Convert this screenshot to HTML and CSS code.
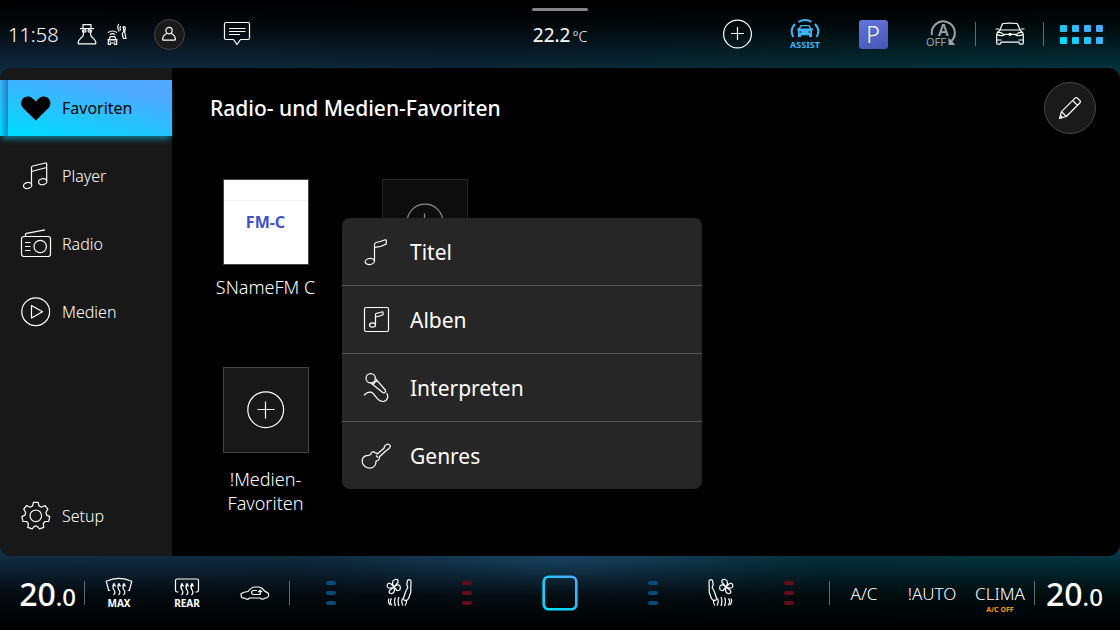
FILE: index.html
```html
<!DOCTYPE html>
<html lang="de">
<head>
<meta charset="utf-8">
<meta name="viewport" content="width=device-width, initial-scale=1">
<title>Radio- und Medien-Favoriten</title>
<link rel="stylesheet" href="styles.css">
</head>
<body>
<header class="topbar">
  <div class="status">
    <time class="clock">11:58</time>
    <div class="status-icons">
      <svg class="icon" width="20" height="22" viewBox="0 0 20 22"><path d="M6 5.500V1.600h8v3.900M3 5.700h14M6.500 10.500L5.300 7M13.500 10.500L14.700 7M6.500 10.500l-.5 2.500-3 3-1.700 2.500v2.300h17.400v-2.300L17 16l-3-3-.5-2.500"/><circle cx="7.700" cy="7.900" r="1.200"/><circle cx="12.300" cy="7.900" r="1.200"/></svg>
      <svg class="icon" width="20" height="22" viewBox="0 0 20 22"><path d="M2 17l1.200-3.400h4.600L9 17M.5 16.500h10M1.300 17v4.500h2V20h4.400v1.500h2V17zM2.500 18.500h1M7.500 18.500h1M3 11.600q2.500-1.800 5 0M1 9.500q4.500-3 9 0M13.800 3q-1.600 2 0 4.500M11.800 1Q9.500 4.200 12.200 8.500M16 4q2.300-1 2.300 1.500L17.700 9l1.300 6.500h-2.500L15.200 11l1.800-3z"/></svg>
    </div>
    <button class="slot" aria-label="Benutzer"><span class="avatar"><svg class="icon" width="16" height="16" viewBox="0 0 16 16"><circle cx="8" cy="4.600" r="3.200"/><path d="M5.800 7.500C3 9 1.600 10.500 1.600 13.200q0 1 1 1h10.800q1 0 1-1C14.400 10.500 13 9 10.200 7.500"/></svg></span></button>
    <button class="slot" aria-label="Nachrichten"><svg class="icon" width="28" height="26" viewBox="0 0 28 26"><path d="M3 1.500h22q1.500 0 1.500 1.500v14q0 1.500-1.500 1.500h-7.500l-3.500 5-3.500-5H3q-1.500 0-1.500-1.500V3Q1.500 1.500 3 1.500zM6 7.500h16.500M6 10.500h16.500M6 13.500h11"/></svg></button>
  </div>
  <div class="outside">
    <span class="handle"></span>
    <p class="outside-temp">22.2<small>°C</small></p>
  </div>
  <nav class="quick" aria-label="Schnellzugriff">
    <button class="slot" aria-label="Hinzufügen"><svg class="icon" width="30" height="30" viewBox="0 0 30 30"><circle cx="15.500" cy="15" r="13.900"/><path d="M9 14.500h13M15.500 8v13"/></svg></button>
    <button class="slot assist"><svg width="30" height="20" viewBox="0 0 30 20"><g fill="none" stroke="currentColor" stroke-width="2"><path d="M8.500 2.800Q15-.6 21.500 2.800M5 5Q-.8 11 3.400 18M25 5q5.800 6 1.600 13"/></g><path fill="currentColor" fill-rule="evenodd" d="M7 9.700l1.700-.4L10.500 6h9l1.800 3.300 1.700.4v1.500h-1V18h-3v-1.800h-8V18H8v-6.800H7zM11.300 7.200L10.200 9.500h9.600l-1.100-2.300zM9.500 12.500v1h2v-1zM18.500 12.500v1h2v-1z"/></svg><span>ASSIST</span></button>
    <button class="slot"><span class="park">P</span></button>
    <button class="slot stopstart" aria-label="Start-Stopp aus"><svg width="32" height="30" viewBox="0 0 32 30"><path d="M7 16A11.500 11.500 0 1 1 26.500 22" fill="none" stroke="currentColor" stroke-width="2"/><path d="M23.500 18.500v7.500h7z" fill="currentColor"/><text x="13" y="17" class="mark-a">A</text><text x="1" y="27" class="mark-off">OFF</text></svg></button>
    <span class="divider"></span>
    <button class="slot car-slot" aria-label="Fahrzeug"><svg class="icon" width="32" height="24" viewBox="0 0 32 24"><path d="M6 8Q7.500 3 9 1.500q7-.8 14 0Q24.500 3 26 8M1.500 7h3.800M26.700 7h3.800M6 8h20M6 8q-3 2-3.300 4.500v8.500q0 1.200 1.200 1.200h1.800q1.200 0 1.300-2h18q.1 2 1.300 2h1.800q1.200 0 1.200-1.200V12.500Q29 10 26 8M3.500 10.200q5 .2 6.500 3.300-4.500.5-7-1M28.500 10.200q-5 .2-6.500 3.300 4.500.5 7-1M10 12.300h12M3 18h4.500M29 18h-4.500"/><circle cx="16" cy="12.300" r="1"/></svg></button>
    <span class="divider"></span>
    <button class="apps" aria-label="Apps"><i></i><i></i><i></i><i></i><i></i><i></i><i></i><i></i></button>
  </nav>
</header>

<div class="panel">
  <nav class="sidebar" aria-label="Medien">
    <a class="nav-item active" href="#favoriten" aria-current="page"><svg width="32" height="32" viewBox="0 0 32 32"><path d="M15.800 28.500L3.300 16.300C.6 13.500 .5 9.500 2.800 6.800 5.300 3.900 9.800 4 12.600 6.500c1.600 1.200 2.400 2 3.200 3.300C16.600 8.500 17.400 7.700 19 6.500c2.800-2.500 7.300-2.600 9.800.3 2.300 2.700 2.200 6.700-.5 9.500z"/></svg>Favoriten</a>
    <a class="nav-item" href="#player"><svg class="icon" width="32" height="32" viewBox="0 0 32 32"><path d="M11.500 24.500V7.500q0-1.200 1.200-1.500L25.500 3q1.200-.2 1.200 1v16.500M11.500 11.500l15.200-4"/><ellipse cx="7.600" cy="25.500" rx="4.200" ry="3" transform="rotate(-12 7.600 25.500)"/><ellipse cx="22.700" cy="21.700" rx="4.200" ry="3" transform="rotate(-12 22.700 21.700)"/></svg>Player</a>
    <a class="nav-item" href="#radio"><svg class="icon" width="32" height="32" viewBox="0 0 32 32"><rect x="1.500" y="8.500" width="29" height="20" rx="2.500"/><circle cx="20.200" cy="18.500" r="6.200"/><path d="M5.500 8.500V6.300q0-.8 1-1L25 1.800M5 14.500h5.500M5 18.500h5.500M5 22.500h5.500"/></svg>Radio</a>
    <a class="nav-item" href="#medien"><svg class="icon" width="32" height="32" viewBox="0 0 32 32"><circle cx="15.700" cy="15.700" r="13.900"/><path d="M11.500 9.500v12.500L22.500 15.700z"/></svg>Medien</a>
    <a class="nav-item setup" href="#setup"><svg class="icon" width="32" height="32" viewBox="0 0 32 32"><circle cx="15.800" cy="15.800" r="5.800"/><path d="M13.400 2.400h4.800l.8 3.600 2.600 1.200 3.300-1.700 3 3.700-2 3.100.7 2.800 3.100 1.500-1 4.700-3.700.2-1.800 2.200.6 3.700-4.300 1.500-2.500-2.800h-2.400l-2.500 2.800-4.300-1.500.6-3.700-1.800-2.200-3.700-.2-1-4.700L5 15.100l.7-2.800-2-3.100 3-3.700L10 7.200 12.600 6z"/></svg>Setup</a>
  </nav>
  <main class="content">
    <div class="content-head">
      <h1>Radio- und Medien-Favoriten</h1>
      <button class="edit" aria-label="Bearbeiten"><svg class="icon" width="26" height="26" viewBox="0 0 26 26"><path d="M2.500 23.500l2-6.800L18 3.200q1.200-1.200 2.500 0l2.300 2.300q1.300 1.300 0 2.500L9.300 21.500zM4.500 16.700l4.800 4.800M15.700 5.500l4.800 4.800M2.500 23.500l1-3 2 2z"/></svg></button>
    </div>
    <div class="favorites">
      <button class="favorite"><span class="tile station">FM-C</span><span class="label">SNameFM C</span></button>
      <button class="favorite dimmed" aria-label="Favorit hinzufügen"><span class="tile"><svg class="icon" width="38" height="38" viewBox="0 0 38 38"><circle cx="19" cy="19" r="17.900"/><path d="M10.500 18.500h17M18.500 10.500v17"/></svg></span></button>
      <button class="favorite add"><span class="tile"><svg class="icon" width="38" height="38" viewBox="0 0 38 38"><circle cx="18.700" cy="18.700" r="17.900"/><path d="M10.500 18.500h17M18.500 10.500v17"/></svg></span><span class="label">!Medien-<br>Favoriten</span></button>
    </div>
    <div class="menu" role="menu">
      <button class="menu-item" role="menuitem"><svg class="icon" width="32" height="32" viewBox="0 0 32 32"><path d="M14.500 25V8.500Q14.500 7 16 6.500q4-.5 9.500-2.700.8-.2.800.7v3.400q-5 3-11.800 3.500"/><ellipse cx="9.800" cy="25.500" rx="4.700" ry="3" transform="rotate(-8 9.800 25.500)"/></svg>Titel</button>
      <button class="menu-item" role="menuitem"><svg class="icon" width="32" height="32" viewBox="0 0 32 32"><rect x="4.500" y="3.500" width="24" height="24" rx="1.500"/><path d="M15.500 20v-9.500q0-1 1-1.200 2.500-.3 6-1.500.5-.2.500.5v2.500q-3 1.500-7.500 2.200"/><ellipse cx="12.500" cy="21" rx="3" ry="2.200"/></svg>Alben</button>
      <button class="menu-item" role="menuitem"><svg class="icon" width="32" height="32" viewBox="0 0 32 32"><circle cx="10.700" cy="6.300" r="4.700"/><path d="M12.700 12.500L17 8.300 25.300 18q.8 1.300-.3 2.300t-2.300.2zM10.500 10.800l2.200 1.700M14.800 5.500L17 8.300M4 23.500q3-4 7-3.300c4 .8 5.500 9.300 12 9.300 4 0 6.300-5 3.500-8.500"/></svg>Interpreten</button>
      <button class="menu-item" role="menuitem"><svg class="icon" width="32" height="32" viewBox="0 0 32 32"><path d="M17.200 14L24 8.200q.3-3.200 3.700-4.200 2 .3 2.800 2.200-.8 3-4.200 4.300L19.700 16.500q-.7.800-.2 2-1.500 2.600-3.500 2.700.2 3.300-1.800 5.200-3 2.600-6.700 1.300-4.700-1.500-5.300-6.200-.2-4.800 4.300-5.800 3.300-.2 4.500-1.500-.3-1.800 2-2.500 1.800 0 2 1.200 1.400-.3 2.200 1.100zM16 15.500l2 2.200"/></svg>Genres</button>
    </div>
  </main>
</div>

<footer class="climate">
  <div class="side">
    <button class="temp" aria-label="Temperatur links 20.0">20<small>.0</small></button>
    <span class="divider"></span>
    <button class="slot defrost"><svg class="icon" width="28" height="20" viewBox="0 0 28 20"><path d="M5.200 13.500H3.700L1.200 4.200Q14-1.500 26.800 4.200l-2.500 9.300h-1.500M9 8q-2 2.500 0 5t-.5 5M14 8q-2 2.500 0 5t-.5 5M19 8q-2 2.500 0 5t-.5 5M7.500 9.500L9 6.500l1.500 3M12.500 9.500L14 6.500l1.500 3M17.500 9.500L19 6.500l1.500 3"/></svg><span>MAX</span></button>
    <button class="slot defrost"><svg class="icon" width="28" height="20" viewBox="0 0 28 20"><path d="M5.500 15H4.200Q2.500 15 2.500 13.300V3.500Q2.500 2 4 2h20q1.500 0 1.500 1.500v9.800q0 1.700-1.700 1.700h-1.300M9 8q-2 2.500 0 5t-.5 5M14 8q-2 2.500 0 5t-.5 5M19 8q-2 2.500 0 5t-.5 5M7.500 9.500L9 6.500l1.500 3M12.500 9.500L14 6.500l1.500 3M17.500 9.500L19 6.500l1.500 3"/></svg><span>REAR</span></button>
    <button class="slot" aria-label="Umluft"><svg class="icon" width="30" height="16" viewBox="0 0 30 16"><path d="M5 13.200H3.200q-2-.4-2-2L1 8.800q2.500-1.900 7-2.300Q11.500 2 15 2h4q3 .3 6 4.300 3.500 1 3.800 3.500-.2 2.500-2.300 3.200h-1.500M9.700 13h10.500M5 13.200q2.300 2.300 4.700-.2M20.200 13q2.300 2.500 4.800 0"/><path d="M17 5.500h-3.500q-2 .3-2 2t2 2h6.700V6M18.200 7.200l2-2 2 2"/></svg></button>
    <span class="divider"></span>
  </div>
  <div class="seats">
    <span class="slot level cool"><i></i><i></i><i></i></span>
    <button class="slot" aria-label="Sitz links"><svg class="icon" width="28" height="30" viewBox="0 0 28 30"><g id="seat"><path d="M22.500 2.500q2-2 3.500.5l-.3 11.500-2.200 6q-1.500 3-4.500 1.500l-.7-1.500 2.700-7.700 1.800-3.300-1-3zM6.500 20.500q-2.500 3 .5 7M10.500 19.500q-2 3.500 0 8.500M14 19q-1.800 4 0 9M17.500 20.500q-1.700 3 .5 7M21.500 22.500q.5 2.500-1.500 5M4 20.500q-1.500 3 1 6.500"/><path d="M9 9Q5.500 3 10 1.500q4-.5 3 3L9 9zM9 9q4.500-4 6.200-.5Q16 13 12 12.500L9 9zM9 9q1.500 6-2.500 6.700Q2.500 15 5 12L9 9zM9 9Q4 11.500 2.300 8.700 1.500 4.500 5.500 5.500L9 9z"/></g></svg></button>
    <span class="slot level heat"><i></i><i></i><i></i></span>
    <button class="home" aria-label="Home"><svg width="36" height="36" viewBox="0 0 36 36"><defs><linearGradient id="homeStroke" x1="0" y1="1" x2="1" y2="0"><stop offset=".2" stop-color="#00dcff"/><stop offset="1" stop-color="#50a8ff"/></linearGradient></defs><rect x="1.700" y="1.700" width="32.600" height="32.600" rx="5" fill="none" stroke="url(#homeStroke)" stroke-width="2.600"/></svg></button>
    <span class="slot level cool"><i></i><i></i><i></i></span>
    <button class="slot" aria-label="Sitz rechts"><svg class="icon" width="28" height="30" viewBox="0 0 28 30"><use href="#seat" transform="matrix(-1 0 0 1 28 0)"/></svg></button>
    <span class="slot level heat"><i></i><i></i><i></i></span>
  </div>
  <div class="side end">
    <span class="divider"></span>
    <button class="slot">A/C</button>
    <button class="slot">!AUTO</button>
    <button class="slot clima">CLIMA<span class="note">A/C OFF</span></button>
    <span class="divider"></span>
    <button class="temp" aria-label="Temperatur rechts 20.0">20<small>.0</small></button>
  </div>
</footer>
</body>
</html>
```

FILE: styles.css
```css
* {
  box-sizing: border-box;
}

body {
  margin: 0;
  min-height: 100vh;
  display: grid;
  grid-template-rows: 68px 1fr 74px;
  font-family: "Noto Sans", "Open Sans", sans-serif;
  font-weight: 300;
  color: #fff;
  background:
    linear-gradient(to bottom, #000 0, rgba(0, 0, 0, 0.85) 24px, rgba(0, 0, 0, 0.15) 68px, rgba(0, 0, 0, 0.05) 80px, transparent calc(100% - 78px), rgba(0, 0, 0, 0.8) calc(100% - 34px), #000 100%),
    radial-gradient(ellipse 260px 90px at 50% calc(100% - 64px), #1a4a6c, transparent),
    linear-gradient(to right, #12304a, #0e2c40 40%, #05343f 75%, #033a45);
}

button {
  padding: 0;
  border: 0;
  background: none;
  color: inherit;
  font: inherit;
  cursor: pointer;
}

a {
  color: inherit;
  text-decoration: none;
}

svg {
  display: block;
  flex: none;
}

.icon {
  fill: none;
  stroke: currentColor;
  stroke-width: 1.200;
  stroke-linejoin: round;
}

.slot {
  position: relative;
  width: 68px;
  height: 100%;
  display: flex;
  flex-direction: column;
  align-items: center;
  justify-content: center;
}

.divider {
  width: 1px;
  height: 24px;
  background: #66696c;
}

/* Top bar */

.topbar {
  display: grid;
  grid-template-columns: 1fr auto 1fr;
}

.status,
.quick {
  display: flex;
  align-items: center;
}

.clock {
  width: 77px;
  padding-left: 8px;
  font-size: 20px;
}

.status-icons {
  width: 58px;
  display: flex;
  gap: 10px;
}

.avatar {
  width: 31px;
  height: 31px;
  display: grid;
  place-items: center;
  border: 1px solid #484848;
  border-radius: 50%;
  background: #1a1a1a;
}

.outside {
  display: flex;
  flex-direction: column;
  align-items: center;
  padding-top: 8px;
}

.handle {
  width: 56px;
  height: 3px;
  border-radius: 2px;
  background: #858585;
}

.outside-temp {
  margin: 10px 0 0;
  font-size: 19px;
  font-weight: 400;
  line-height: 28px;
}

.outside-temp small {
  margin-left: 2px;
  font-size: 14px;
  font-weight: 300;
}

.quick {
  justify-content: flex-end;
}

.assist {
  color: #40b4ee;
  font-size: 9px;
  font-weight: 700;
  line-height: 11px;
}

.park {
  width: 29px;
  height: 29px;
  border-radius: 3px;
  background: linear-gradient(160deg, #6474dc, #4456b4);
  font-size: 23px;
  line-height: 28px;
}

.stopstart {
  color: #9aa2a8;
}

.mark-a {
  font-size: 16px;
  font-weight: 600;
  fill: currentColor;
}

.mark-off {
  font-size: 11px;
  font-weight: 400;
  fill: currentColor;
}

.car-slot {
  width: 67px;
}

.apps {
  width: 76px;
  display: grid;
  grid-template-columns: repeat(4, 7px);
  gap: 5px;
  padding-left: 16px;
}

.apps i {
  height: 7px;
  border-radius: 1px;
  background: #3cb4ff;
}

.apps i:nth-child(1) { background: #20c4ff; }
.apps i:nth-child(2) { background: #2cbcff; }
.apps i:nth-child(4) { background: #4aacff; }
.apps i:nth-child(5) { background: #00dcff; }
.apps i:nth-child(6) { background: #14d0ff; }
.apps i:nth-child(7) { background: #24c4ff; }

/* Main panel */

.panel {
  display: grid;
  grid-template-columns: 172px 1fr;
  border-radius: 12px;
  overflow: hidden;
  background: #000;
}

.sidebar {
  display: flex;
  flex-direction: column;
  gap: 12px;
  padding: 12px 0;
  background: #181818;
}

.nav-item {
  height: 56px;
  display: flex;
  align-items: center;
  gap: 10px;
  padding-left: 20px;
  font-size: 16px;
}

.nav-item.active {
  background:
    linear-gradient(to right, rgba(20, 70, 140, 0) 0, rgba(20, 70, 140, 0.55) 8px, transparent 8px),
    linear-gradient(12deg, #00dcff 5%, #50a8ff 80%);
  box-shadow: 0 5px 6px -2px rgba(20, 150, 180, 0.8);
  color: #000;
  font-weight: 400;
}

.setup {
  margin-top: auto;
}

.content {
  position: relative;
  padding: 14px 24px 0 14px;
}

.content-head {
  display: flex;
  align-items: center;
  justify-content: space-between;
  padding-left: 24px;
}

h1 {
  margin: 0;
  font-size: 21px;
  font-weight: 500;
}

.edit {
  width: 52px;
  height: 52px;
  display: grid;
  place-items: center;
  border: 1px solid #484848;
  border-radius: 50%;
  background: #1a1a1a;
}

.favorites {
  display: grid;
  grid-template-columns: repeat(2, 159px);
  grid-auto-rows: 188px;
  margin-top: 45px;
}

.favorite {
  display: flex;
  flex-direction: column;
  align-items: center;
  gap: 10px;
  font-size: 18px;
  line-height: 24px;
}

.favorite.add {
  gap: 14px;
}

.tile {
  width: 86px;
  height: 86px;
  display: grid;
  place-items: center;
  border: 1px solid #444;
  background: #181818;
}

.station {
  background: linear-gradient(#fff 20px, #f0f0f0 20px, #f0f0f0 21px, #fff 21px);
  color: #4450c8;
  font-size: 16px;
  font-weight: 700;
}

.dimmed {
  opacity: 0.55;
}

.menu {
  position: absolute;
  top: 150px;
  left: 170px;
  width: 360px;
  border-radius: 8px;
  overflow: hidden;
  background: #262626;
}

.menu-item {
  width: 100%;
  height: 68px;
  display: flex;
  align-items: center;
  gap: 18px;
  padding-left: 18px;
  border-bottom: 1px solid #555;
  font-size: 21px;
  font-weight: 400;
}

.menu-item:last-child {
  height: 67px;
  border-bottom: 0;
}

/* Climate bar */

.climate {
  display: grid;
  grid-template-columns: 1fr auto 1fr;
}

.side,
.seats {
  display: flex;
  align-items: center;
}

.side {
  font-size: 17px;
}

.end {
  justify-content: flex-end;
}

.temp {
  width: 84px;
  padding-right: 8px;
  text-align: right;
  font-size: 32px;
  font-weight: 500;
}

.end .temp {
  width: 85px;
  padding: 0 0 0 11px;
  text-align: left;
}

.temp small {
  font-size: 24px;
}

.defrost {
  font-size: 10px;
  font-weight: 700;
  line-height: 12px;
}

.level {
  gap: 6px;
}

.level i {
  width: 10px;
  height: 4px;
  border-radius: 2px;
}

.cool i {
  background: #054c78;
}

.heat i {
  background: #640c1c;
}

.home {
  width: 118px;
  height: 100%;
  display: grid;
  place-items: center;
}

.clima .note {
  position: absolute;
  top: 48px;
  left: 0;
  right: 0;
  color: #f90;
  font-size: 7px;
  font-weight: 700;
  line-height: 12px;
}
```
